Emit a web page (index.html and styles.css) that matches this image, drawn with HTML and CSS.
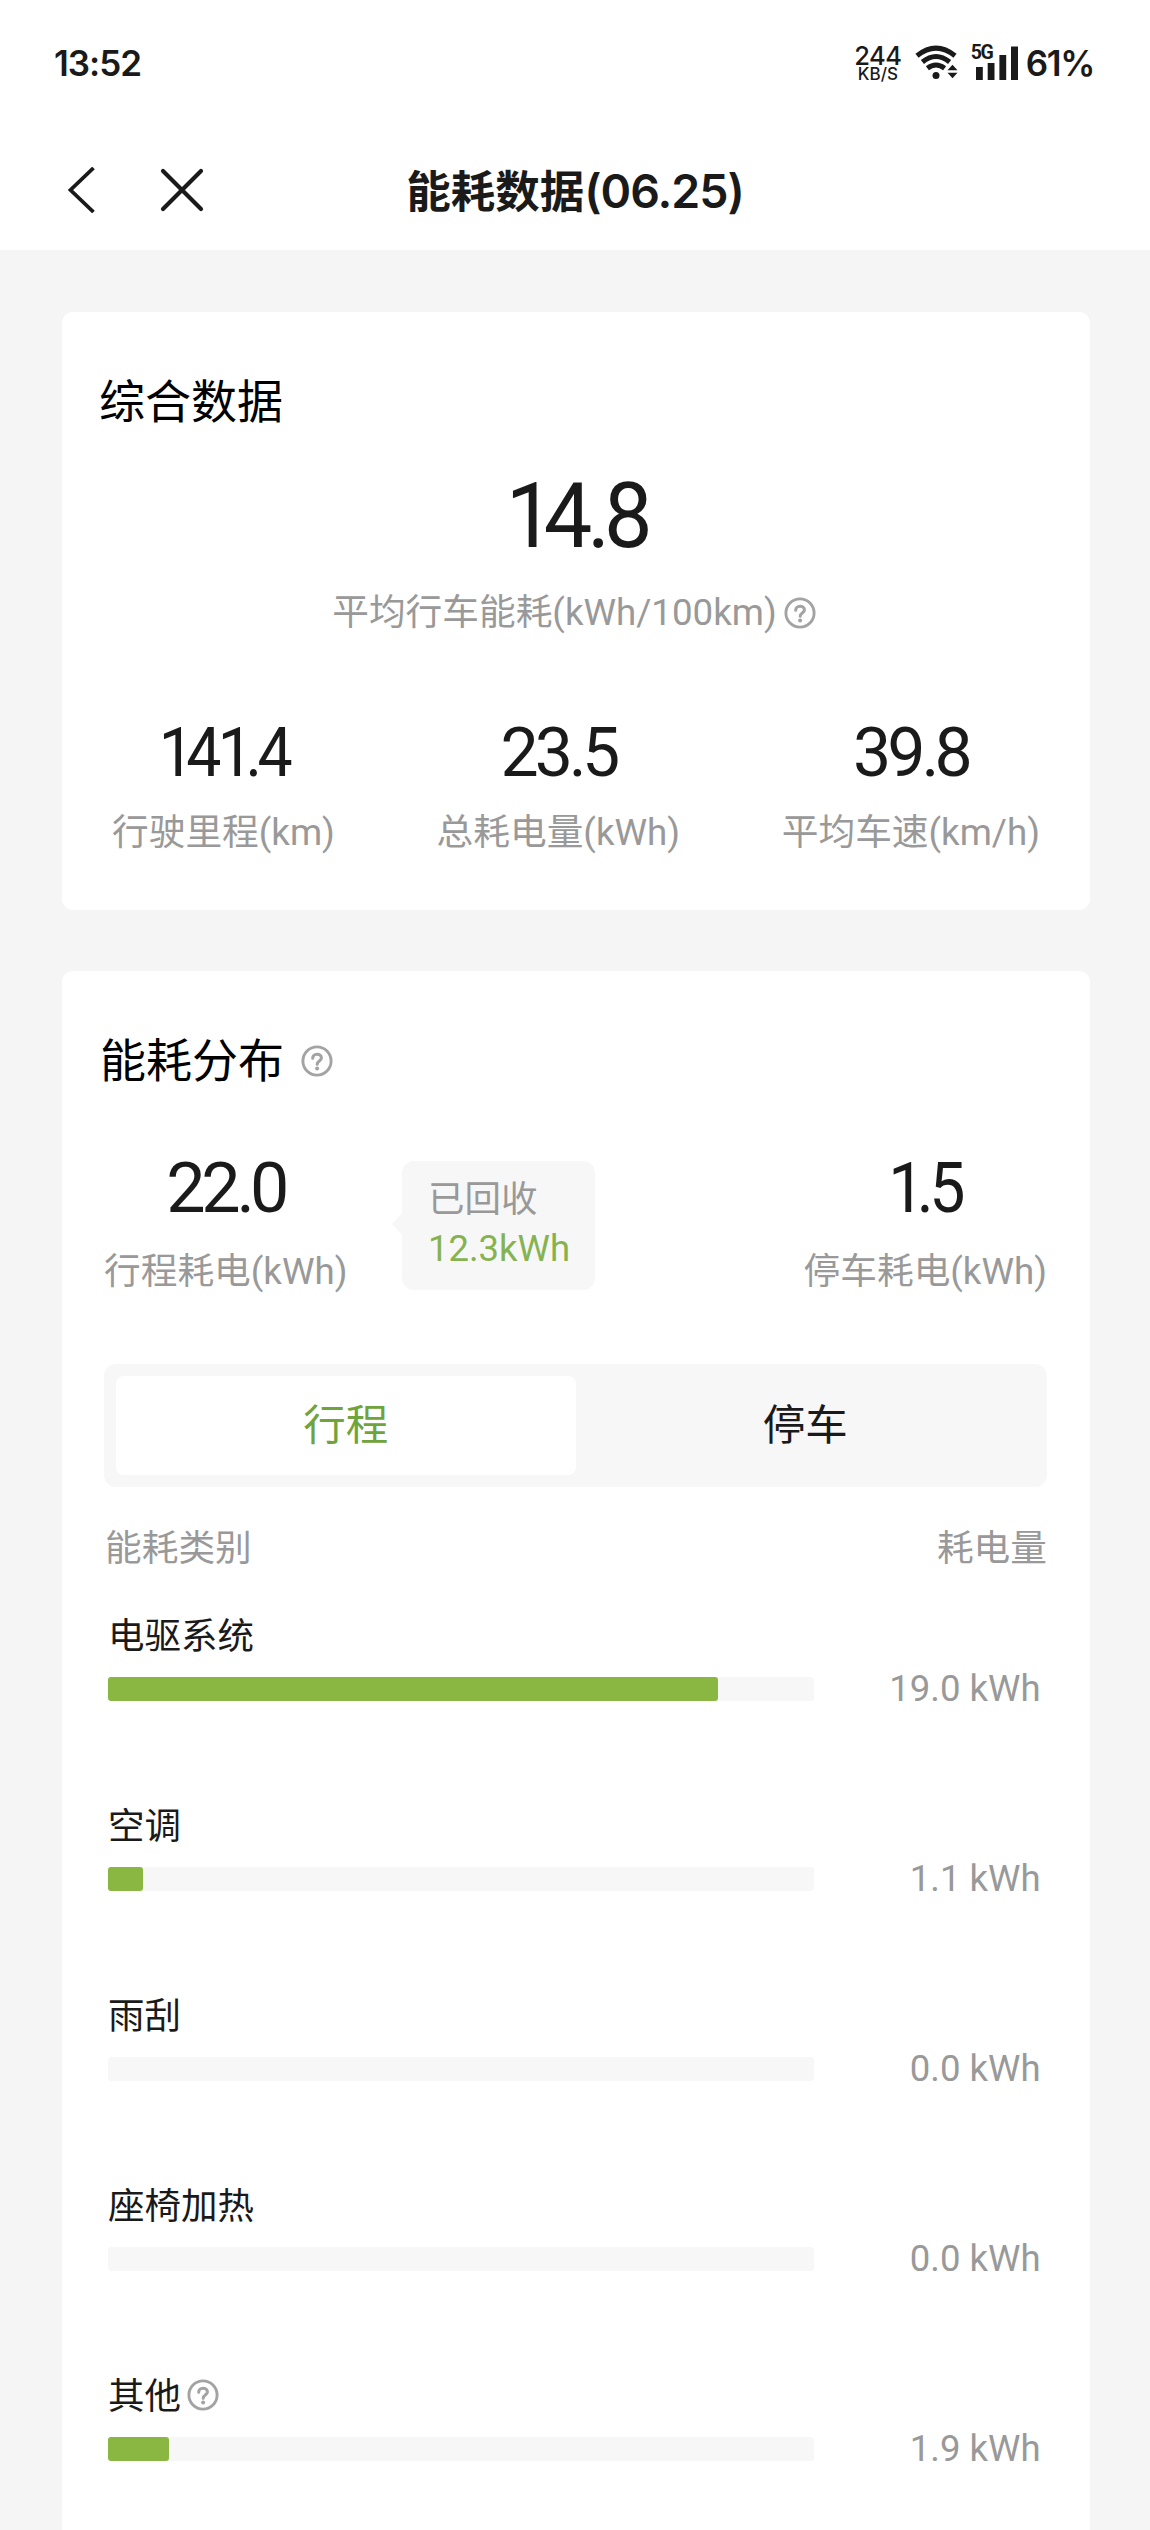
FILE: index.html
```html
<!DOCTYPE html>
<html lang="zh-CN">
<head>
<meta charset="utf-8">
<title>能耗数据</title>
<link rel="stylesheet" href="styles.css">
</head>
<body>
<svg class="defs" width="0" height="0" aria-hidden="true">
  <symbol id="help" viewBox="0 0 32 32">
    <circle cx="16" cy="16" r="14.1" fill="none" stroke="#a3a3a3" stroke-width="2.9"/>
    <path d="M11.7 13.2C11.7 10.8 13.6 9.2 16 9.2s4.4 1.6 4.4 3.8c0 2.9-4.2 3.2-4.2 6.2" fill="none" stroke="#a3a3a3" stroke-width="3.1" stroke-linecap="round"/>
    <circle cx="16.1" cy="23.4" r="2" fill="#a3a3a3"/>
  </symbol>
</svg>
<header class="top">
  <div class="status">
    <span class="clock">13:52</span>
    <div class="status-icons">
      <div class="speed"><span class="speed-num">244</span><span class="speed-unit">KB/S</span></div>
      <svg class="wifi" width="44" height="36" viewBox="0 0 44 36">
        <g fill="none" stroke="#1a1a1a" stroke-width="5">
          <path d="M2 10.8Q21 -4.5 40 10.8"/>
          <path d="M7.4 17Q21 6 34.6 17"/>
          <path d="M12.4 23.2Q21 16.8 29.6 23.2"/>
        </g>
        <circle cx="21" cy="30.5" r="3.5" fill="#1a1a1a"/>
        <path d="M32.5 25.3L37.5 19.8L42.5 25.3ZM32.5 27.8L37.5 33.3L42.5 27.8Z" fill="#1a1a1a"/>
      </svg>
      <div class="signal">
        <span class="gen">5G</span>
        <svg width="43" height="34" viewBox="0 0 43 34">
          <path d="M0 21h6.8v13H0zM11.7 17h6.8v17h-6.8zM23.4 9h6.8v25h-6.8zM35 .5h7V34h-7z" fill="#1a1a1a"/>
        </svg>
      </div>
      <span class="battery">61%</span>
    </div>
  </div>
  <nav class="nav">
    <div class="nav-buttons">
      <svg width="30" height="46" viewBox="0 0 30 46"><path d="M26.5 1L3.5 23L26.5 45" fill="none" stroke="#1a1a1a" stroke-width="3.8"/></svg>
      <svg width="44" height="44" viewBox="0 0 44 44"><path d="M3 3L41 41M41 3L3 41" fill="none" stroke="#1a1a1a" stroke-width="4.2" stroke-linecap="round"/></svg>
    </div>
    <h1 class="nav-title">能耗数据<span class="date">(06.25)</span></h1>
    <div></div>
  </nav>
</header>
<main class="page">
  <section class="card summary">
    <h2 class="card-title">综合数据</h2>
    <div class="hero"><span class="one">1</span>4<span class="dot">.</span>8</div>
    <div class="label hero-label">平均行车能耗(kWh/100km)<svg class="help"><use href="#help"/></svg></div>
    <div class="stats">
      <div class="stat"><div class="num narrow"><span class="one">1</span>4<span class="one">1</span><span class="dot">.</span>4</div><div class="label">行驶里程(km)</div></div>
      <div class="stat"><div class="num">23<span class="dot">.</span>5</div><div class="label">总耗电量(kWh)</div></div>
      <div class="stat"><div class="num">39<span class="dot">.</span>8</div><div class="label">平均车速(km/h)</div></div>
    </div>
  </section>
  <section class="card spread">
    <h2 class="card-title">能耗分布<svg class="help title-help"><use href="#help"/></svg></h2>
    <div class="split">
      <div class="stat"><div class="num">22<span class="dot">.</span>0</div><div class="label">行程耗电(kWh)</div></div>
      <div class="bubble"><div class="bubble-name">已回收</div><div class="bubble-value">12.3kWh</div></div>
      <div class="stat last"><div class="num narrow"><span class="one">1</span><span class="dot">.</span>5</div><div class="label">停车耗电(kWh)</div></div>
    </div>
    <div class="tabs"><div class="tab active">行程</div><div class="tab">停车</div></div>
    <div class="columns label"><span>能耗类别</span><span>耗电量</span></div>
    <div class="rows">
      <div class="row"><div class="name">电驱系统</div><div class="meter"><div class="track"><div class="fill" style="width:86.4%"></div></div><div class="value">19.0 kWh</div></div></div>
      <div class="row"><div class="name">空调</div><div class="meter"><div class="track"><div class="fill" style="width:5%"></div></div><div class="value">1.1 kWh</div></div></div>
      <div class="row"><div class="name">雨刮</div><div class="meter"><div class="track"></div><div class="value">0.0 kWh</div></div></div>
      <div class="row"><div class="name">座椅加热</div><div class="meter"><div class="track"></div><div class="value">0.0 kWh</div></div></div>
      <div class="row"><div class="name">其他<svg class="help name-help"><use href="#help"/></svg></div><div class="meter"><div class="track"><div class="fill" style="width:8.6%"></div></div><div class="value">1.9 kWh</div></div></div>
    </div>
  </section>
</main>
</body>
</html>
```
FILE: styles.css
```css
* { box-sizing: border-box; }
body {
  margin: 0;
  width: 1150px;
  background: #f5f5f5;
  color: #1a1a1a;
  font-family: Roboto, "Noto Sans CJK SC", sans-serif;
  font-size: 36.5px;
}
h1, h2 { margin: 0; font-weight: 400; }
svg { display: block; flex: none; }
.defs { display: none; }

.top { height: 250px; background: #fff; font-family: Inter, "Noto Sans CJK SC", sans-serif; }
.status {
  height: 126px;
  padding: 0 56px 0 54px;
  display: flex;
  align-items: center;
  justify-content: space-between;
}
.clock, .battery { font-size: 35px; font-weight: 600; line-height: 40px; letter-spacing: -1px; white-space: nowrap; }
.status-icons { display: flex; align-items: center; }
.speed { width: 48px; display: flex; flex-direction: column; align-items: center; font-weight: 500; }
.speed-num { font-size: 25.5px; line-height: 22px; letter-spacing: -.6px; }
.speed-unit { font-size: 17px; line-height: 14px; }
.wifi { margin-left: 13px; }
.signal { width: 48px; height: 34px; margin-left: 12px; padding-left: 5px; position: relative; }
.gen { position: absolute; left: 0; top: 0; font-family: Roboto, sans-serif; font-size: 19.5px; font-weight: 700; line-height: 14px; letter-spacing: -1.5px; }
.battery { margin-left: 7px; letter-spacing: -1.4px; }

.nav {
  height: 124px;
  padding: 3px 66px 0;
  display: grid;
  grid-template-columns: 1fr auto 1fr;
  align-items: center;
}
.nav-buttons { display: flex; align-items: center; gap: 63px; padding-left: 1px; }
.nav-title { font-size: 44.5px; font-weight: 700; line-height: 60px; padding-top: 3px; }
.date { font-size: 46.5px; font-weight: 600; letter-spacing: -1px; }

.page { padding: 62px 60px 0 62px; display: flex; flex-direction: column; gap: 61.5px; }
.card { background: #fff; border-radius: 11px; }
.card-title {
  display: flex;
  align-items: center;
  font-size: 46px;
  line-height: 60px;
  color: #000;
}
.label { color: #999; font-size: 36.7px; line-height: 44px; white-space: nowrap; }
.help { width: 32px; height: 32px; }

.summary { height: 597.5px; padding: 60px 50px 0 37px; }
.hero { margin: 35px 0 0 14px; text-align: center; font-size: 90px; line-height: 100px; letter-spacing: -.06em; transform: scaleX(.96); }
.one { letter-spacing: -.12em; }
.dot { letter-spacing: -.07em; }
.hero-label { margin: 24px 0 0 9px; display: flex; align-items: center; justify-content: center; gap: 7px; }
.stats { margin: 78px 0 0 13px; display: flex; justify-content: space-between; }
.stat { display: flex; flex-direction: column; align-items: center; }
.num { font-size: 68px; line-height: 80px; letter-spacing: -.06em; margin-bottom: 18px; }
.narrow { transform: scaleX(.92); }

.spread { height: 1559px; padding: 60px 43px 0 42px; border-radius: 11px 11px 0 0; }
.spread .card-title { margin-left: -4px; }
.title-help { margin-left: 17px; }
.split { margin-top: 57px; display: flex; align-items: flex-start; }
.split .num { font-size: 70px; margin-bottom: 22px; }
.last { margin-left: auto; }
.bubble {
  position: relative;
  width: 193px;
  height: 129px;
  margin: 12.5px 0 0 55px;
  padding: 14px 25.5px;
  background: #f7f7f7;
  border-radius: 12px;
}
.bubble::before {
  content: "";
  position: absolute;
  left: -10.5px;
  top: 52px;
  width: 11px;
  height: 23px;
  background: #f7f7f7;
  clip-path: polygon(100% 0, 0 50%, 100% 100%);
}
.bubble-name { color: #999; line-height: 50px; }
.bubble-value { color: #86b350; line-height: 48px; }

.tabs {
  height: 123px;
  margin-top: 70px;
  padding: 12px;
  display: flex;
  background: #f7f7f7;
  border-radius: 12px;
}
.tab { flex: 1; border-radius: 8px; text-align: center; font-size: 42.5px; line-height: 99px; }
.active { background: #fff; color: #6fa33c; }

.columns { margin-top: 40px; padding-left: 1px; display: flex; justify-content: space-between; }
.rows { margin-top: 44px; padding: 0 6.5px 0 4px; }
.row { height: 189.9px; }
.name { height: 44px; display: flex; align-items: center; line-height: 44px; }
.name-help { margin: 0 0 3px 6px; }
.meter { margin-top: 8px; height: 44px; display: flex; align-items: center; justify-content: space-between; }
.track { width: 706px; height: 24px; background: #f7f7f7; border-radius: 3px; }
.fill { height: 24px; background: #8ab741; border-radius: 3px; }
.value { color: #999; line-height: 44px; }
```
